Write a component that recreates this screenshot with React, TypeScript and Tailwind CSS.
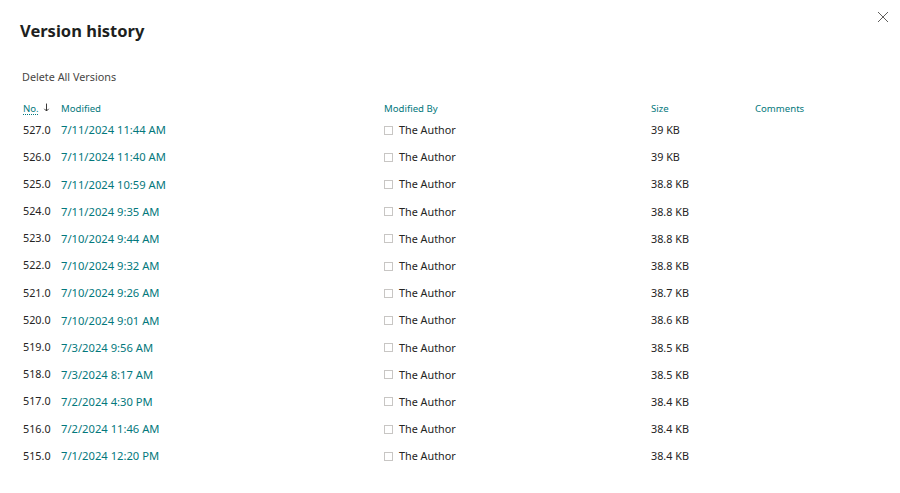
import React from 'react';

const versions = [
  { no: '527.0', date: '7/11/2024 11:44 AM', size: '39 KB' },
  { no: '526.0', date: '7/11/2024 11:40 AM', size: '39 KB' },
  { no: '525.0', date: '7/11/2024 10:59 AM', size: '38.8 KB' },
  { no: '524.0', date: '7/11/2024 9:35 AM', size: '38.8 KB' },
  { no: '523.0', date: '7/10/2024 9:44 AM', size: '38.8 KB' },
  { no: '522.0', date: '7/10/2024 9:32 AM', size: '38.8 KB' },
  { no: '521.0', date: '7/10/2024 9:26 AM', size: '38.7 KB' },
  { no: '520.0', date: '7/10/2024 9:01 AM', size: '38.6 KB' },
  { no: '519.0', date: '7/3/2024 9:56 AM', size: '38.5 KB' },
  { no: '518.0', date: '7/3/2024 8:17 AM', size: '38.5 KB' },
  { no: '517.0', date: '7/2/2024 4:30 PM', size: '38.4 KB' },
  { no: '516.0', date: '7/2/2024 11:46 AM', size: '38.4 KB' },
  { no: '515.0', date: '7/1/2024 12:20 PM', size: '38.4 KB' },
];

const cols = 'grid grid-cols-[38px_323px_267px_104px_1fr] items-center';

export default function App() {
  return (
    <div
      className="relative w-[900px] h-[493px] bg-white text-[#323130]"
      style={{ fontFamily: '"Noto Sans", "Open Sans", sans-serif' }}
    >
      {/* close button */}
      <button className="absolute top-[11px] right-[11px] w-[12px] h-[12px] text-[#605e5c]">
        <svg viewBox="0 0 12 12" width="12" height="12" fill="none" stroke="currentColor" strokeWidth="1">
          <path d="M1 1 L11 11 M11 1 L1 11" />
        </svg>
      </button>

      <div className="pl-[20px] pt-[19px]">
        <h1 className="text-[16.5px] leading-[24px] font-bold text-[#201f1e]">Version history</h1>

        <div className="pl-[2px] mt-[26px] text-[10.8px] leading-[16px] text-[#484644]">
          Delete All Versions
        </div>

        {/* table */}
        <div className="pl-[3px] mt-[16px]">
          <div className={`${cols} h-[16px] text-[9.6px] text-[#03787c]`}>
            <div className="flex items-center gap-[4px]">
              <span className="underline decoration-dotted underline-offset-2">No.</span>
              <svg viewBox="0 0 8 10" width="7" height="9" className="text-[#323130] -mt-[2px]">
                <path d="M4 0.5 V9 M1.5 6.5 L4 9 L6.5 6.5" stroke="currentColor" strokeWidth="1.1" fill="none" />
              </svg>
            </div>
            <div>Modified</div>
            <div>Modified By</div>
            <div>Size</div>
            <div>Comments</div>
          </div>

          <div className="mt-[0px]">
            {versions.map((v) => (
              <div key={v.no} className={`${cols} h-[27.2px]`}>
                <div className="text-[10.8px] -mt-[2px] text-[#252423]">{v.no}</div>
                <div className="text-[11.2px] text-[#03787c]">{v.date}</div>
                <div className="flex items-center gap-[6px] -mt-[1px]">
                  <span className="w-[9px] h-[9px] border border-[#c8c6c4] bg-white" />
                  <span className="text-[10.8px] text-[#252423]">The Author</span>
                </div>
                <div className="text-[10.8px] -mt-[1px] text-[#252423]">{v.size}</div>
                <div />
              </div>
            ))}
          </div>
        </div>
      </div>
    </div>
  );
}
